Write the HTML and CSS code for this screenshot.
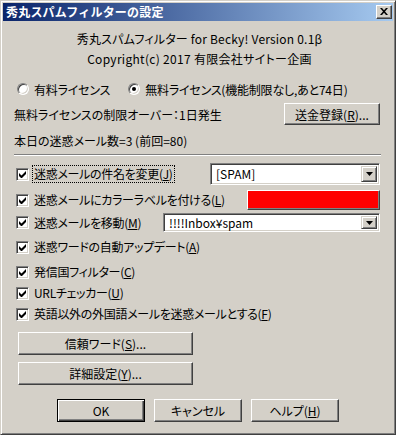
FILE: index.html
```html
<!DOCTYPE html>
<html lang="ja">
<head>
<meta charset="utf-8">
<link rel="stylesheet" href="styles.css">
</head>
<body>
<div class="window">
  <div class="titlebar">
    <span class="title">秀丸スパムフィルターの設定</span>
    <span class="close"><svg width="8" height="7" viewBox="0 0 8 7"><path d="M0 0h2l2 2.3L6 0h2L5 3.5 8 7H6L4 4.7 2 7H0l3-3.5z" fill="#000"/></svg></span>
  </div>
  <div class="content">
    <div class="hline h1">秀丸スパムフィルター for Becky! Version 0.1β</div>
    <div class="hline h2">Copyright(c) 2017 有限会社サイトー企画</div>

    <div class="row radios">
      <label class="radio"><span class="rbox"></span>有料ライセンス</label>
      <label class="radio r2"><span class="rbox on"><span class="dot"></span></span>無料ライセンス(機能制限なし,あと74日)</label>
    </div>

    <div class="row limit">
      <span>無料ライセンスの制限オーバー：1日発生</span>
      <span class="btn send">送金登録(<u>R</u>)...</span>
    </div>

    <div class="row today">本日の迷惑メール数=3 (前回=80)</div>

    <div class="sep"></div>

    <div class="row cb c1">
      <span class="cbox"><svg width="7" height="7" viewBox="0 0 7 7"><path d="M0 2v3l2 2h1l4-4V0L2.5 4.5z" fill="#000"/></svg></span>
      <span class="lbl focus">迷惑メールの件名を変更(<u>J</u>)</span>
      <span class="combo w1"><span class="val">[SPAM]</span><span class="drop"><svg width="7" height="4" viewBox="0 0 7 4"><path d="M0 0h7L3.5 4z" fill="#000"/></svg></span></span>
    </div>
    <div class="row cb c2">
      <span class="cbox"><svg width="7" height="7" viewBox="0 0 7 7"><path d="M0 2v3l2 2h1l4-4V0L2.5 4.5z" fill="#000"/></svg></span>
      <span class="lbl">迷惑メールにカラーラベルを付ける(<u>L</u>)</span>
      <span class="color"></span>
    </div>
    <div class="row cb c3">
      <span class="cbox"><svg width="7" height="7" viewBox="0 0 7 7"><path d="M0 2v3l2 2h1l4-4V0L2.5 4.5z" fill="#000"/></svg></span>
      <span class="lbl">迷惑メールを移動(<u>M</u>)</span>
      <span class="combo w3"><span class="val">!!!!Inbox¥spam</span><span class="drop"><svg width="7" height="4" viewBox="0 0 7 4"><path d="M0 0h7L3.5 4z" fill="#000"/></svg></span></span>
    </div>
    <div class="row cb c4">
      <span class="cbox"><svg width="7" height="7" viewBox="0 0 7 7"><path d="M0 2v3l2 2h1l4-4V0L2.5 4.5z" fill="#000"/></svg></span>
      <span class="lbl">迷惑ワードの自動アップデート(<u>A</u>)</span>
    </div>
    <div class="row cb c5">
      <span class="cbox"><svg width="7" height="7" viewBox="0 0 7 7"><path d="M0 2v3l2 2h1l4-4V0L2.5 4.5z" fill="#000"/></svg></span>
      <span class="lbl">発信国フィルター(<u>C</u>)</span>
    </div>
    <div class="row cb c6">
      <span class="cbox"><svg width="7" height="7" viewBox="0 0 7 7"><path d="M0 2v3l2 2h1l4-4V0L2.5 4.5z" fill="#000"/></svg></span>
      <span class="lbl">URLチェッカー(<u>U</u>)</span>
    </div>
    <div class="row cb c7">
      <span class="cbox"><svg width="7" height="7" viewBox="0 0 7 7"><path d="M0 2v3l2 2h1l4-4V0L2.5 4.5z" fill="#000"/></svg></span>
      <span class="lbl">英語以外の外国語メールを迷惑メールとする(<u>F</u>)</span>
    </div>

    <div class="btn wide b1">信頼ワード(<u>S</u>)...</div>
    <div class="btn wide b2">詳細設定(<u>Y</u>)...</div>

    <div class="footer">
      <span class="btn foot def">OK</span>
      <span class="btn foot">キャンセル</span>
      <span class="btn foot">ヘルプ(<u>H</u>)</span>
    </div>
  </div>
</div>
</body>
</html>
```

FILE: styles.css
```css
* { box-sizing: border-box; }
html, body { margin: 0; padding: 0; background: #d4d0c8; }
body {
  font-family: "Noto Sans CJK JP", "Noto Sans", sans-serif;
  font-size: 12px;
  color: #000;
  font-feature-settings: "palt" 1;
}
.window {
  width: 396px;
  height: 435px;
  background: #d4d0c8;
  border: 1px solid;
  border-color: #d4d0c8 #404040 #404040 #d4d0c8;
  box-shadow: inset 1px 1px #fff, inset -1px -1px #808080;
  padding: 2px;
  overflow: hidden;
}
.titlebar {
  height: 18px;
  background: linear-gradient(to right, #0a246a, #a6caf0);
  display: flex;
  align-items: center;
  justify-content: space-between;
  padding: 0 1px 0 3px;
}
.title {
  color: #fff;
  font-weight: bold;
  font-size: 12px;
  line-height: 18px;
  font-feature-settings: normal;
  letter-spacing: 0.2px;
}
.close {
  width: 16px;
  height: 14px;
  background: #d4d0c8;
  border: 1px solid;
  border-color: #fff #404040 #404040 #fff;
  box-shadow: inset -1px -1px #808080;
  display: flex;
  align-items: center;
  justify-content: center;
  padding-bottom: 1px;
}
.content {
  padding: 0 12px 0 11px;
}
.hline {
  height: 18px;
  line-height: 18px;
  text-align: center;
  padding-left: 4px;
}
.h1 { margin-top: 9px; letter-spacing: 0.2px; }
.h2 { margin-top: 2px; letter-spacing: 0.3px; }
.row {
  display: flex;
  align-items: center;
  height: 18px;
  white-space: nowrap;
}
.radios { margin-top: 12px; letter-spacing: -0.2px; }
.radio { display: flex; align-items: center; }
.r2 { margin-left: 15px; }
.rbox {
  width: 12px;
  height: 12px;
  border-radius: 50%;
  background: #fff;
  border: 1px solid;
  border-color: #808080 #fff #fff #808080;
  box-shadow: inset 1px 1px #404040, inset -1px -1px #d4d0c8;
  margin: 0 5px 0 3px;
  display: flex;
  align-items: center;
  justify-content: center;
}
.dot { width: 4px; height: 4px; border-radius: 50%; background: #000; }
.limit {
  height: 22px;
  margin-top: 5px;
  justify-content: space-between;
  padding-left: 0;
}
.today { margin-top: 6px; }
.sep {
  height: 2px;
  margin: 5px 0 0 0;
  border-top: 1px solid #808080;
  border-bottom: 1px solid #fff;
  width: 367px;
}
.btn {
  display: inline-flex;
  align-items: center;
  justify-content: center;
  background: #d4d0c8;
  border: 1px solid;
  border-color: #fff #404040 #404040 #fff;
  box-shadow: inset -1px -1px #808080;
  white-space: nowrap;
}
.send { width: 96px; height: 22px; margin-right: 1px; }
.cb { padding-left: 2px; }
.cbox {
  flex: none;
  width: 13px;
  height: 13px;
  background: #fff;
  border: 1px solid;
  border-color: #808080 #fff #fff #808080;
  box-shadow: inset 1px 1px #404040, inset -1px -1px #d4d0c8;
  display: flex;
  align-items: center;
  justify-content: center;
  margin-right: 4px;
}
.lbl { padding: 0 1px; line-height: 16px; letter-spacing: -0.3px; }
.focus { outline: 1px dotted #000; outline-offset: 0; }
.c1 { height: 22px; margin-top: 7px; }
.c2 { height: 20px; margin-top: 5px; }
.c3 { height: 19px; margin-top: 3px; }
.c4 { margin-top: 6px; }
.c5 { margin-top: 7px; }
.c6 { margin-top: 3px; }
.c7 { margin-top: 3px; }
.combo {
  margin-left: auto;
  margin-right: 1px;
  height: 100%;
  background: #fff;
  border: 1px solid;
  border-color: #808080 #fff #fff #808080;
  box-shadow: inset 1px 1px #404040, inset -1px -1px #d4d0c8;
  display: flex;
  align-items: center;
  padding: 2px;
}
.w1 { width: 170px; }
.w3 { width: 217px; }
.val { flex: 1; padding-left: 3px; line-height: 14px; }
.drop {
  width: 16px;
  height: 100%;
  background: #d4d0c8;
  border: 1px solid;
  border-color: #d4d0c8 #404040 #404040 #d4d0c8;
  box-shadow: inset 1px 1px #fff, inset -1px -1px #808080;
  display: flex;
  align-items: center;
  justify-content: center;
}
.color {
  margin-left: auto;
  margin-right: 1px;
  width: 133px;
  height: 20px;
  background: #ff0000;
  border: 1px solid;
  border-color: #fff #404040 #404040 #fff;
  box-shadow: inset -1px -1px #808080;
}
.wide { display: flex; width: 175px; height: 23px; margin-left: 4px; }
.b1 { margin-top: 9px; }
.b2 { margin-top: 7px; }
.footer {
  display: flex;
  margin-top: 14px;
  padding-left: 43px;
  gap: 9px;
}
.foot { width: 88px; height: 23px; }
.def {
  border: 1px solid #000;
  box-shadow: inset 1px 1px #fff, inset -1px -1px #404040, inset -2px -2px #808080;
}
u { text-decoration: underline; text-underline-offset: 1px; }
```
